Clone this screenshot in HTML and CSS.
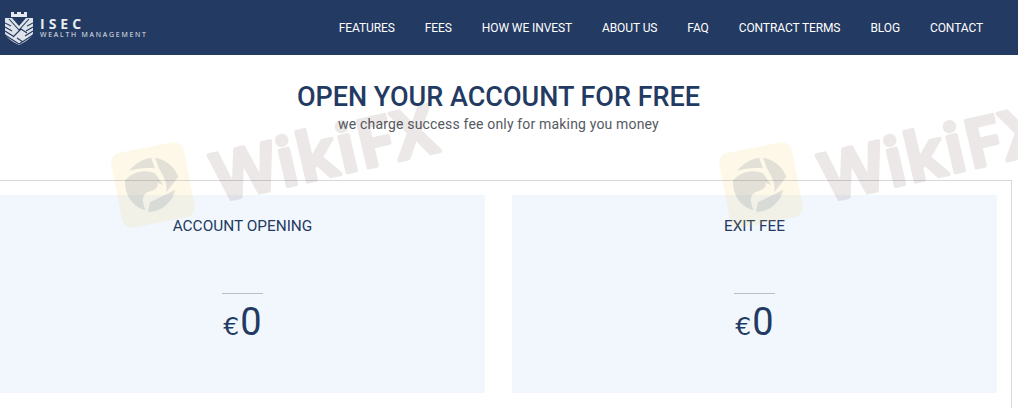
FILE: index.html
```html
<!DOCTYPE html>
<html lang="en">
<head>
<meta charset="utf-8">
<title>ISEC Wealth Management</title>
<link rel="stylesheet" href="styles.css">
</head>
<body>
<header class="topbar">
  <a class="brand" href="#">
    <svg class="brand-mark" width="28" height="33" viewBox="0 0 28 33">
      <path fill="#e6e9ee" d="M6 0h3v2h3V0h4v2h3V0h3v5H6z"/>
      <path fill="#dfe3ea" d="M0 6h7l7 8 7-8h7v15c0 4-8 9-14 12C8 30 0 25 0 21z"/>
      <path fill="none" stroke="#233a62" stroke-width="1.1" d="M0 11l6 3M0 15l7 4M0 19l8 5M0 23l14 9M28 11l-6 3M28 15l-7 4M28 19l-8 5M28 23L14 32M4 7l10 11L24 7M8 25l8-8 6 4M12 26l6 4"/>
    </svg>
    <span class="brand-text">
      <span class="brand-name">ISEC</span>
      <span class="brand-sub">WEALTH MANAGEMENT</span>
    </span>
  </a>
  <nav class="nav">
    <a href="#">FEATURES</a>
    <a href="#">FEES</a>
    <a href="#">HOW WE INVEST</a>
    <a href="#">ABOUT US</a>
    <a href="#">FAQ</a>
    <a href="#">CONTRACT TERMS</a>
    <a href="#">BLOG</a>
    <a href="#">CONTACT</a>
  </nav>
</header>
<main class="content">
  <section class="intro">
    <h1>OPEN YOUR ACCOUNT FOR FREE</h1>
    <p>we charge success fee only for making you money</p>
  </section>
  <section class="pricing">
    <article class="card">
      <h2>ACCOUNT OPENING</h2>
      <div class="rule"></div>
      <div class="price"><span class="cur">€</span>0</div>
    </article>
    <article class="card">
      <h2>EXIT FEE</h2>
      <div class="rule"></div>
      <div class="price"><span class="cur">€</span>0</div>
    </article>
  </section>
</main>
<svg class="wm wm-one" width="370" height="150" viewBox="0 -10 370 150">
  <rect class="wm-tile" x="16" y="47" width="74" height="76" rx="10" transform="rotate(-11 53 85)"/>
  <g class="wm-bird" transform="translate(5 35) scale(.3333)">
    <path d="M72 108C90 85 115 72 138 68l12 32c-28-3-56 0-78 8z"/>
    <path d="M60 137c20-26 60-36 90-22l25 36-18-8c6 13-8 24-27 27-18 8-22 26-8 55C85 218 58 180 60 137z"/>
    <path d="M150 68c34 6 60 30 70 57l-35 46c2-24-8-46-22-68z"/>
    <path d="M135 202l76-38c-8 36-42 68-82 66z"/>
  </g>
  <text class="wm-text" x="119" y="102" transform="rotate(-13 119 102)">WikiFX</text>
</svg>
<svg class="wm wm-two" width="370" height="150" viewBox="0 -10 370 150">
  <rect class="wm-tile" x="16" y="47" width="74" height="76" rx="10" transform="rotate(-11 53 85)"/>
  <g class="wm-bird" transform="translate(5 35) scale(.3333)">
    <path d="M72 108C90 85 115 72 138 68l12 32c-28-3-56 0-78 8z"/>
    <path d="M60 137c20-26 60-36 90-22l25 36-18-8c6 13-8 24-27 27-18 8-22 26-8 55C85 218 58 180 60 137z"/>
    <path d="M150 68c34 6 60 30 70 57l-35 46c2-24-8-46-22-68z"/>
    <path d="M135 202l76-38c-8 36-42 68-82 66z"/>
  </g>
  <text class="wm-text" x="119" y="102" transform="rotate(-13 119 102)">WikiFX</text>
</svg>
```

FILE: styles.css
```css
html, body {
  margin: 0;
  padding: 0;
  background: #fff;
  overflow: hidden;
  height: 408px;
}
body {
  position: relative;
  font-family: Roboto, "Liberation Sans", sans-serif;
  color: #233a62;
}
a { color: inherit; text-decoration: none; }

.topbar {
  height: 55px;
  background: #233a62;
  display: flex;
  align-items: center;
  justify-content: space-between;
  padding: 0 35px 0 5px;
}
.brand {
  display: flex;
  align-items: center;
  gap: 7px;
  color: #e8ebf0;
  margin-top: 1px;
}
.brand-text { display: flex; flex-direction: column; }
.brand-name {
  font-family: "Open Sans", sans-serif;
  font-weight: 700;
  font-size: 14px;
  letter-spacing: 4px;
  line-height: 13px;
}
.brand-sub {
  font-family: "Open Sans", sans-serif;
  font-size: 7px;
  letter-spacing: 1.75px;
  line-height: 9px;
}
.nav {
  display: flex;
  gap: 30px;
  font-size: 12px;
  font-weight: 400;
  letter-spacing: -0.1px;
  color: #fff;
}

.content {
  display: flex;
  flex-direction: column;
}
.intro {
  text-align: center;
  padding: 26px 21px 0 0;
  height: 100px;
  box-sizing: border-box;
}
.intro h1 {
  margin: 0;
  font-size: 27px;
  line-height: 32px;
  font-weight: 500;
  color: #233a62;
}
.intro p {
  margin: 0;
  font-size: 14px;
  line-height: 22px;
  letter-spacing: 0.17px;
  color: #555a62;
}
.pricing {
  margin: 25px 0 0 -15px;
  width: 1027px;
  height: 240px;
  box-sizing: border-box;
  border: 1px solid #d6d6dc;
  padding: 14px;
  display: flex;
  gap: 27px;
  align-items: flex-start;
}
.card {
  width: 485px;
  height: 198px;
  background: #f2f7fe;
  display: flex;
  flex-direction: column;
  align-items: center;
  flex: none;
}
.card h2 {
  margin: 21px 0 0;
  font-size: 15.4px;
  line-height: 20px;
  font-weight: 400;
  color: #233a62;
}
.rule {
  width: 41px;
  height: 1px;
  background: #b9bfc8;
  margin-top: 57px;
}
.price {
  font-size: 38px;
  line-height: 42px;
  margin-top: 7px;
  font-weight: 400;
  color: #233a62;
}
.cur {
  font-family: "DejaVu Sans", sans-serif;
  font-size: 25px;
  font-weight: 400;
  margin-right: 1px;
}

.wm {
  position: absolute;
  top: 90px;
  pointer-events: none;
}
.wm-one { left: 100px; }
.wm-two { left: 708px; }
.wm-tile { fill: #f9c642; fill-opacity: 0.12; }
.wm-bird { fill: #233a62; fill-opacity: 0.12; }
.wm-text {
  font-family: "Noto Sans", sans-serif;
  font-weight: 600;
  font-size: 67px;
  letter-spacing: 1.5px;
  fill: #4a2a20;
  stroke: #4a2a20;
  stroke-width: 4px;
  stroke-linejoin: round;
  paint-order: stroke;
  opacity: 0.1;
}
```
